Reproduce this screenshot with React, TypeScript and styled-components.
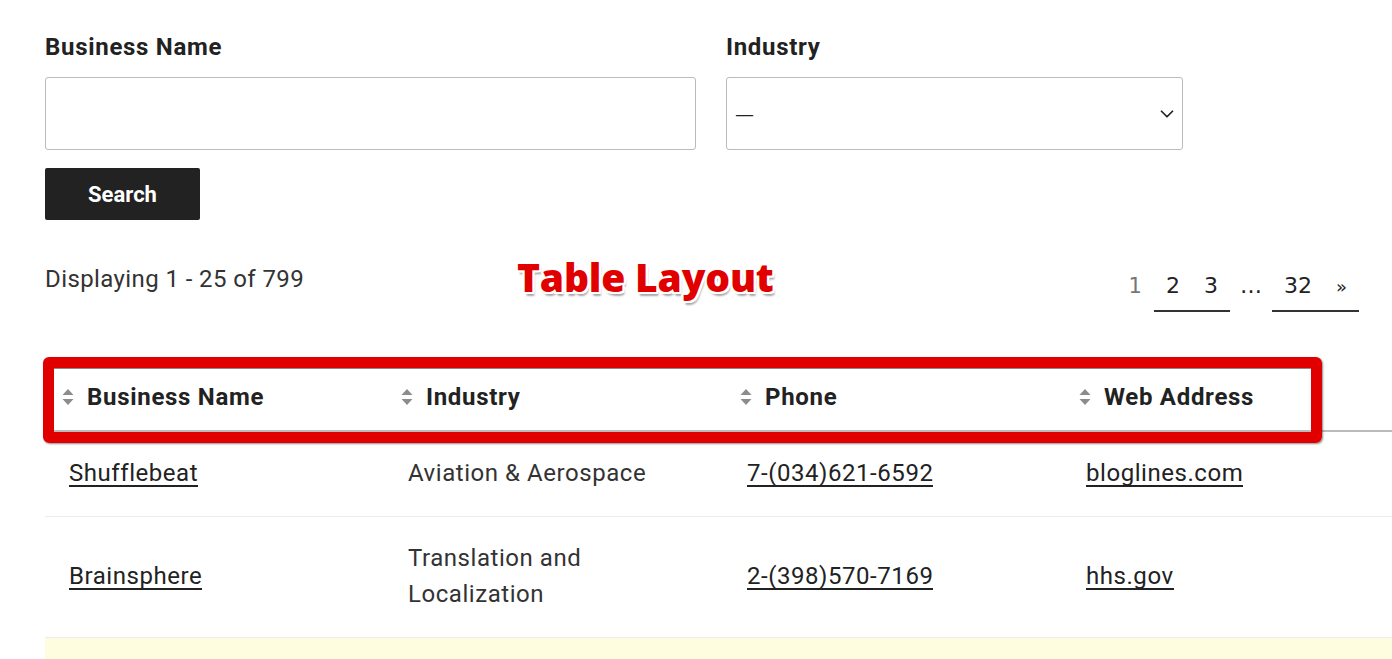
import React from 'react'
import styled, { createGlobalStyle } from 'styled-components'
import { ChevronDown } from 'lucide-react'

const GlobalStyle = createGlobalStyle`
  html, body {
    margin: 0;
    padding: 0;
    background: #fff;
    overflow: hidden;
  }
  body {
    font-family: Roboto, 'Liberation Sans', sans-serif;
    color: #222;
  }
`

const Page = styled.div`
  position: relative;
  width: 1392px;
  height: 659px;
  padding: 29px 0 0 45px;
  box-sizing: border-box;
  overflow: hidden;
`

const SearchForm = styled.form`
  display: grid;
  grid-template-columns: 651px 457px;
  column-gap: 30px;
`

const Field = styled.div`
  display: flex;
  flex-direction: column;
`

const Label = styled.label`
  font-size: 24px;
  line-height: 36px;
  font-weight: 700;
  letter-spacing: 0.7px;
  color: #222;
  margin-bottom: 12px;
`

const TextInput = styled.input`
  height: 73px;
  box-sizing: border-box;
  border: 1px solid #bbb;
  border-radius: 3px;
  padding: 0 12px;
  font: inherit;
  font-size: 22px;
  background: #fff;
`

const SelectWrap = styled.div`
  height: 73px;
  box-sizing: border-box;
  border: 1px solid #bbb;
  border-radius: 3px;
  display: flex;
  align-items: center;
  justify-content: space-between;
  padding: 0 4px 0 8px;
  font-family: 'DejaVu Sans', sans-serif;
  font-size: 19px;
  color: #222;

  svg {
    color: #222;
  }
`

const SearchButton = styled.button`
  margin-top: 18px;
  width: 155px;
  height: 52px;
  background: #222;
  color: #fff;
  border: none;
  border-radius: 2px;
  font-family: Roboto, 'Liberation Sans', sans-serif;
  font-size: 22px;
  font-weight: 700;
  cursor: pointer;
`

const ResultsBar = styled.div`
  margin-top: 41px;
  width: 1314px;
  display: flex;
  justify-content: space-between;
  align-items: flex-start;
`

const Count = styled.div`
  font-size: 24px;
  line-height: 36px;
  letter-spacing: 0.4px;
  color: #333;
`

const Pagination = styled.nav`
  display: flex;
  font-family: 'DejaVu Sans', sans-serif;
  font-size: 22px;
`

const PageItem = styled.a<{ $link?: boolean; $current?: boolean }>`
  display: inline-block;
  padding: 7px 12px 5px;
  line-height: 36px;
  text-decoration: none;
  color: ${p => (p.$current ? '#767676' : '#222')};
  border-bottom: 2px solid ${p => (p.$link ? '#333' : 'transparent')};
  font-size: ${p => (p.$current ? '21px' : '22px')};
`

const Dots = styled(PageItem)`
  padding: 7px 10px 5px;
`

const Arrow = styled.span`
  font-size: 18px;
`

const Table = styled.table`
  margin-top: 56px;
  width: 1356px;
  table-layout: fixed;
  border-collapse: collapse;
`

const HeadCell = styled.th`
  text-align: left;
  padding: 11px 0 13px 17px;
  font-size: 24px;
  line-height: 36px;
  font-weight: 700;
  letter-spacing: 0.7px;
  color: #222;
  border-bottom: 2px solid #bbb;
`

const HeadInner = styled.span`
  display: inline-flex;
  align-items: center;
  gap: 13px;
`

const Row = styled.tr<{ $highlight?: boolean }>`
  background: ${p => (p.$highlight ? '#fffde0' : '#fff')};
  height: ${p => (p.$highlight ? '85px' : 'auto')};
`

const Cell = styled.td`
  padding: 23px 24px 25px;
  font-size: 24px;
  line-height: 36px;
  letter-spacing: 0.55px;
  color: #333;
  vertical-align: middle;
  border-bottom: 1px solid #ececec;
`

const CellLink = styled.a`
  color: #222;
  text-decoration: none;
  box-shadow: inset 0 -2px 0 #222;
`

const Annotation = styled.div`
  position: absolute;
  left: 43px;
  top: 357px;
  width: 1279px;
  height: 86px;
  box-sizing: border-box;
  border: 11px solid #e10000;
  border-radius: 6px;
  box-shadow: 1px 1px 2px rgba(0, 0, 0, 0.45), inset 0 1px 0 #8a8a8a;
  pointer-events: none;
`

const AnnotationTitle = styled.div`
  position: absolute;
  left: 517px;
  top: 249px;
  font-family: 'Open Sans', sans-serif;
  font-weight: 800;
  font-size: 39px;
  line-height: 56px;
  letter-spacing: -0.2px;
  color: #e10000;
  text-shadow:
    -2px -2px 0 #fff, 2px -2px 0 #fff, -2px 2px 0 #fff, 2px 2px 0 #fff,
    0 -2px 0 #fff, 0 2px 0 #fff, -2px 0 0 #fff, 2px 0 0 #fff,
    2px 4px 2px rgba(0, 0, 0, 0.35);
`

const SortIcon = () => (
  <svg width="12" height="20" viewBox="0 0 12 20">
    <path d="M0.5 8 L6 2 L11.5 8 Z" fill="#8c8c8c" />
    <path d="M0.5 12 L11.5 12 L6 18 Z" fill="#8c8c8c" />
  </svg>
)

const businesses = [
  { name: 'Shufflebeat', industry: 'Aviation & Aerospace', phone: '7-(034)621-6592', web: 'bloglines.com' },
  { name: 'Brainsphere', industry: 'Translation and Localization', phone: '2-(398)570-7169', web: 'hhs.gov' },
]

const columns = ['Business Name', 'Industry', 'Phone', 'Web Address']

export default function App() {
  return (
    <>
      <GlobalStyle />
      <Page>
        <SearchForm onSubmit={e => e.preventDefault()}>
          <Field>
            <Label htmlFor="biz-name">Business Name</Label>
            <TextInput id="biz-name" type="text" />
          </Field>
          <Field>
            <Label>Industry</Label>
            <SelectWrap>
              <span>—</span>
              <ChevronDown size={22} strokeWidth={1.9} />
            </SelectWrap>
          </Field>
        </SearchForm>
        <SearchButton type="button">Search</SearchButton>

        <ResultsBar>
          <Count>Displaying 1 - 25 of 799</Count>
          <Pagination>
            <PageItem $current>1</PageItem>
            <PageItem $link href="#">2</PageItem>
            <PageItem $link href="#">3</PageItem>
            <Dots>…</Dots>
            <PageItem $link href="#">32</PageItem>
            <PageItem $link href="#"><Arrow>»</Arrow></PageItem>
          </Pagination>
        </ResultsBar>

        <Table>
          <thead>
            <tr>
              {columns.map(c => (
                <HeadCell key={c}>
                  <HeadInner>
                    <SortIcon />
                    {c}
                  </HeadInner>
                </HeadCell>
              ))}
            </tr>
          </thead>
          <tbody>
            {businesses.map(b => (
              <Row key={b.name}>
                <Cell><CellLink href="#">{b.name}</CellLink></Cell>
                <Cell>{b.industry}</Cell>
                <Cell><CellLink href="#">{b.phone}</CellLink></Cell>
                <Cell><CellLink href="#">{b.web}</CellLink></Cell>
              </Row>
            ))}
            <Row $highlight>
              <Cell />
              <Cell />
              <Cell />
              <Cell />
            </Row>
          </tbody>
        </Table>

        <AnnotationTitle>Table Layout</AnnotationTitle>
        <Annotation />
      </Page>
    </>
  )
}
